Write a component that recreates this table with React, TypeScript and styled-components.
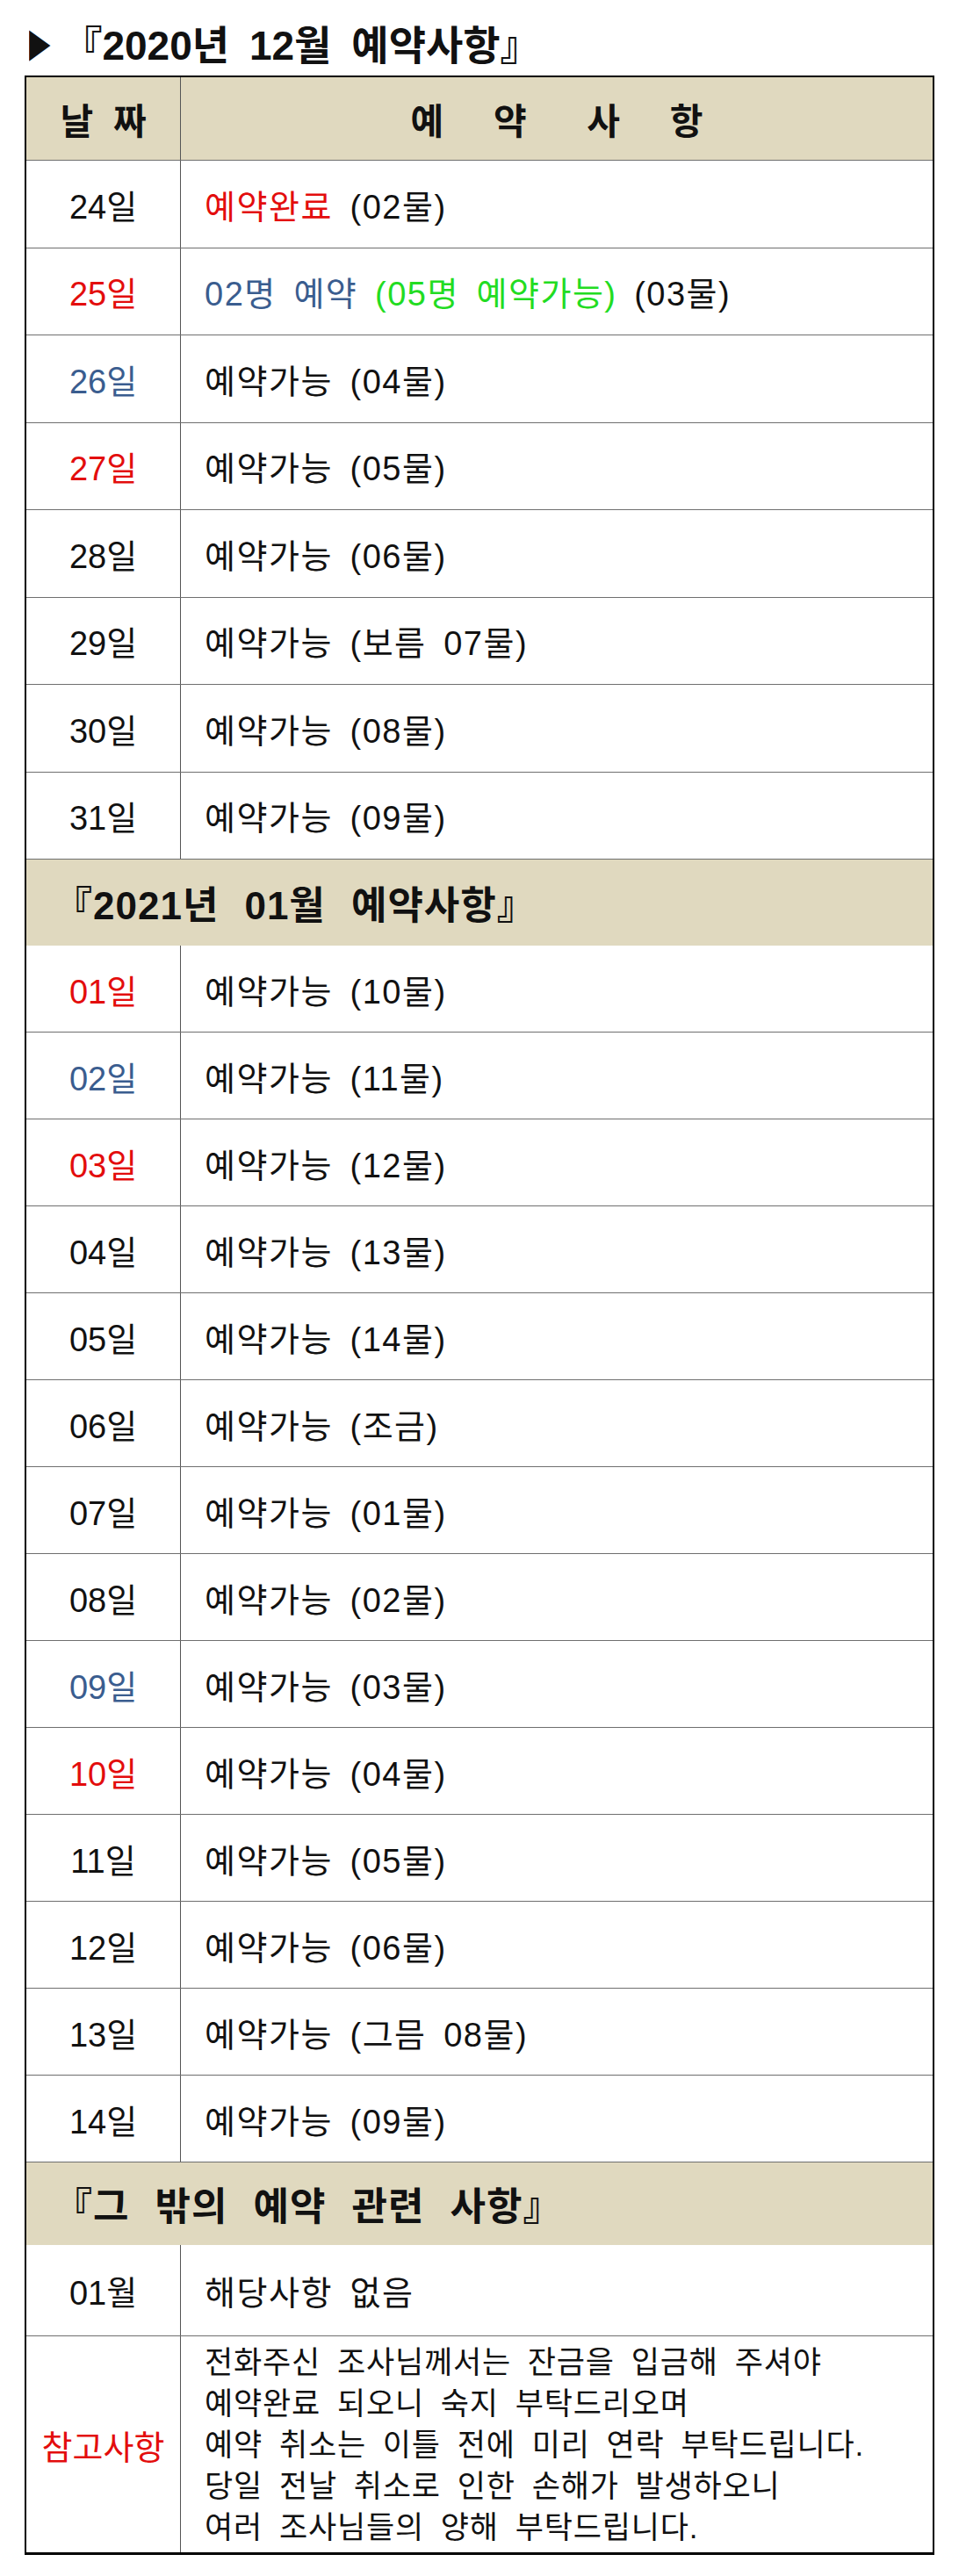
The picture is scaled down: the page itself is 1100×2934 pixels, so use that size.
import React from "react";
import styled, { createGlobalStyle } from "styled-components";

const Global = createGlobalStyle`
  html, body { margin: 0; padding: 0; background: #fff; }
  body { font-family: "Liberation Sans", "Noto Sans CJK KR", sans-serif; color: #111; }
`;

const RED = "#e30d0d";
const BLUE = "#3a5d8f";
const GREEN = "#22dc22";

const Page = styled.div`
  width: 1100px;
  box-sizing: border-box;
  padding: 20px 36px 23px 28px;
`;

const Title = styled.h1`
  margin: 0 0 10px 0;
  height: 56px;
  display: flex;
  align-items: center;
  padding-left: 5px;
  font-size: 46px;
  font-weight: 700;
  white-space: pre;
  word-spacing: 0.22em;
  color: #111;
`;

const Arrow = styled.span`
  font-family: "DejaVu Sans", sans-serif;
  font-size: 46px;
  font-weight: 400;
  margin-right: 2px;
  display: inline-block;
  transform: scaleX(0.69);
  transform-origin: left center;
`;

const Table = styled.div`
  width: 1036px;
  box-sizing: border-box;
  border: 2px solid #000;
  border-bottom-width: 3px;
`;

const Row = styled.div<{ $h: number; $head?: boolean }>`
  display: grid;
  grid-template-columns: 176px 1fr;
  height: ${(p) => p.$h}px;
  background: ${(p) => (p.$head ? "#e0d9bf" : "#fff")};
  & + & {
    border-top: 1px solid #6f6f6f;
  }
`;

const DateCell = styled.div<{ $color?: string; $bold?: boolean; $size?: number }>`
  border-right: 1px solid #555;
  display: flex;
  align-items: center;
  justify-content: center;
  font-size: ${(p) => p.$size ?? 38}px;
  font-weight: ${(p) => (p.$bold ? 700 : 400)};
  color: ${(p) => p.$color ?? "#111"};
  white-space: pre;
`;

const ContentCell = styled.div`
  display: flex;
  align-items: center;
  padding-left: 27px;
  font-size: 38px;
  letter-spacing: 1.5px;
  white-space: pre;
  word-spacing: 0.2em;
`;

const HeadCell = styled.div`
  display: flex;
  align-items: center;
  justify-content: center;
  font-size: 41px;
  font-weight: 700;
  white-space: pre;
`;

const Section = styled.div<{ $h: number }>`
  height: ${(p) => p.$h}px;
  background: #e0d9bf;
  border-top: 1px solid #6f6f6f;
  display: flex;
  align-items: center;
  padding-left: 31px;
  font-size: 44px;
  font-weight: 700;
  letter-spacing: 1px;
  white-space: pre;
  word-spacing: 0.36em;
`;

const Line = styled.span``;

const Tone = styled.span<{ $color: string }>`
  color: ${(p) => p.$color};
`;

const Notes = styled.div`
  display: flex;
  flex-direction: column;
  justify-content: center;
  padding-left: 27px;
  font-size: 35px;
  line-height: 47px;
  letter-spacing: 0.8px;
  word-spacing: 0.24em;
  white-space: pre;
`;

type Day = { d: string; color?: string; text: React.ReactNode };

const dec: Day[] = [
  { d: "24일", text: <><Tone $color={RED}>예약완료</Tone> (02물)</> },
  {
    d: "25일",
    color: RED,
    text: (
      <>
        <Tone $color={BLUE}>02명 예약</Tone>{" "}
        <Tone $color={GREEN}>(05명 예약가능)</Tone> (03물)
      </>
    ),
  },
  { d: "26일", color: BLUE, text: "예약가능 (04물)" },
  { d: "27일", color: RED, text: "예약가능 (05물)" },
  { d: "28일", text: "예약가능 (06물)" },
  { d: "29일", text: "예약가능 (보름 07물)" },
  { d: "30일", text: "예약가능 (08물)" },
  { d: "31일", text: "예약가능 (09물)" },
];

const jan: Day[] = [
  { d: "01일", color: RED, text: "예약가능 (10물)" },
  { d: "02일", color: BLUE, text: "예약가능 (11물)" },
  { d: "03일", color: RED, text: "예약가능 (12물)" },
  { d: "04일", text: "예약가능 (13물)" },
  { d: "05일", text: "예약가능 (14물)" },
  { d: "06일", text: "예약가능 (조금)" },
  { d: "07일", text: "예약가능 (01물)" },
  { d: "08일", text: "예약가능 (02물)" },
  { d: "09일", color: BLUE, text: "예약가능 (03물)" },
  { d: "10일", color: RED, text: "예약가능 (04물)" },
  { d: "11일", text: "예약가능 (05물)" },
  { d: "12일", text: "예약가능 (06물)" },
  { d: "13일", text: "예약가능 (그믐 08물)" },
  { d: "14일", text: "예약가능 (09물)" },
];

const notes = [
  "전화주신 조사님께서는 잔금을 입금해 주셔야",
  "예약완료 되오니 숙지 부탁드리오며",
  "예약 취소는 이틀 전에 미리 연락 부탁드립니다.",
  "당일 전날 취소로 인한 손해가 발생하오니",
  "여러 조사님들의 양해 부탁드립니다.",
];

export default function App() {
  return (
    <Page>
      <Global />
      <Title>
        <Arrow>▶</Arrow>
        <Line>『2020년 12월 예약사항』</Line>
      </Title>
      <Table>
        <Row $h={94} $head>
          <DateCell $bold $size={41}>{"날  짜"}</DateCell>
          <HeadCell>{"예     약      사     항"}</HeadCell>
        </Row>
        {dec.map((r) => (
          <Row key={"d" + r.d} $h={98.5}>
            <DateCell $color={r.color}>{r.d}</DateCell>
            <ContentCell>
              <Line>{r.text}</Line>
            </ContentCell>
          </Row>
        ))}
        <Section $h={98}>
          <Line>『2021년 01월 예약사항』</Line>
        </Section>
        {jan.map((r) => (
          <Row key={"j" + r.d} $h={98}>
            <DateCell $color={r.color}>{r.d}</DateCell>
            <ContentCell>
              <Line>{r.text}</Line>
            </ContentCell>
          </Row>
        ))}
        <Section $h={94}>
          <Line>『그 밖의 예약 관련 사항』</Line>
        </Section>
        <Row $h={103}>
          <DateCell>01월</DateCell>
          <ContentCell>
            <Line>해당사항 없음</Line>
          </ContentCell>
        </Row>
        <Row $h={246}>
          <DateCell $color={RED}>참고사항</DateCell>
          <Notes>
            {notes.map((n) => (
              <div key={n}>{n}</div>
            ))}
          </Notes>
        </Row>
      </Table>
    </Page>
  );
}
